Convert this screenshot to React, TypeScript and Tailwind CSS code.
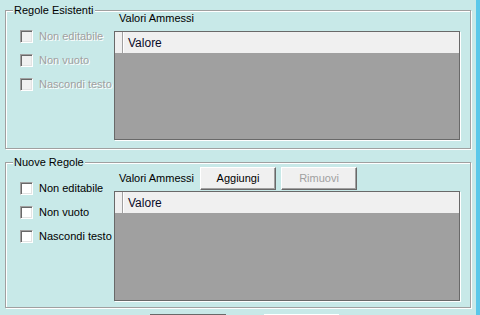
import React from "react";

const font = { fontFamily: '"Liberation Sans", Arial, sans-serif' };

function Check({ label, disabled }: { label: string; disabled?: boolean }) {
  return (
    <div className="flex items-center h-[13px] gap-[6px]">
      <span
        className={
          "block w-[13px] h-[13px] border border-t-[#a0a0a0] border-l-[#a0a0a0] border-b-white border-r-white shadow-[inset_1px_1px_0_#696969,inset_-1px_-1px_0_#e3e3e3] " +
          (disabled ? "bg-[#f0f0f0]" : "bg-white")
        }
      />
      <span
        className={
          "text-[11px] leading-[13px] " +
          (disabled ? "text-[#a0a0a0] [text-shadow:1px_1px_0_#ffffff]" : "text-black")
        }
      >
        {label}
      </span>
    </div>
  );
}

function ListBox({ height }: { height: string }) {
  return (
    <div className={"w-[346px] shrink-0 border border-[#696969] bg-[#a0a0a0] shadow-[1px_1px_0_#fff] flex flex-col " + height}>
      <div className="h-[22px] bg-[#f0f0f0] border-b border-[#a0a0a0] flex">
        <div className="w-[8px] border-r border-[#a0a0a0] shadow-[1px_0_0_#fff]" />
        <div className="pl-[5px] flex items-center text-[12px] text-[#0a0a28]">Valore</div>
      </div>
    </div>
  );
}

function Button({ label, disabled }: { label: string; disabled?: boolean }) {
  return (
    <div
      className={
        "w-[76px] h-[23px] bg-[#f0f0f0] border border-t-white border-l-white border-b-[#696969] border-r-[#696969] shadow-[inset_-1px_-1px_0_#a0a0a0] flex items-center justify-center text-[11px] " +
        (disabled ? "text-[#a0a0a0]" : "text-black")
      }
    >
      {label}
    </div>
  );
}

function Group({ title, className, children }: { title: string; className: string; children: React.ReactNode }) {
  return (
    <div
      className={
        "relative shrink-0 w-[466px] border border-[#a0a0a0] shadow-[inset_1px_1px_0_#fff,1px_1px_0_#fff] " + className
      }
    >
      <span className="absolute left-[7px] top-[-8px] px-[1px] bg-[#c8e9e8] text-[11px] leading-[14px] text-black">
        {title}
      </span>
      {children}
    </div>
  );
}

export default function App() {
  return (
    <div className="w-[480px] h-[315px] overflow-hidden bg-[#c8e9e8] flex" style={font}>
      <div className="flex-1 pt-[10px] pl-[5px] flex flex-col">
        <Group title="Regole Esistenti" className="h-[139px]">
          <div className="flex">
            <div className="w-[108px] pl-[14px] pt-[19px] flex flex-col gap-[11px]">
              <Check label="Non editabile" disabled />
              <Check label="Non vuoto" disabled />
              <Check label="Nascondi testo" disabled />
            </div>
            <div className="flex flex-col">
              <div className="h-[20px] pt-[1px] pl-[5px] text-[11px] leading-[13px] text-black">Valori Ammessi</div>
              <ListBox height="h-[109px]" />
            </div>
          </div>
        </Group>

        <div className="h-[13px] shrink-0" />

        <Group title="Nuove Regole" className="h-[146px]">
          <div className="flex">
            <div className="w-[108px] pl-[14px] pt-[19px] flex flex-col gap-[11px]">
              <Check label="Non editabile" />
              <Check label="Non vuoto" />
              <Check label="Nascondi testo" />
            </div>
            <div className="flex flex-col">
              <div className="h-[28px] pt-[2px] flex items-center">
                <span className="pl-[5px] w-[86px] text-[11px] leading-[13px] text-black">Valori Ammessi</span>
                <div className="flex gap-[5px]">
                  <Button label="Aggiungi" />
                  <Button label="Rimuovi" disabled />
                </div>
              </div>
              <ListBox height="h-[110px]" />
            </div>
          </div>
        </Group>

        <div className="shrink-0 pt-[6px] pl-[145px] flex gap-[38px]">
          <div className="w-[76px] h-[23px] border-t border-[#696969] bg-[#f0f0f0]" />
          <div className="w-[75px] h-[23px] border-t border-white bg-[#f0f0f0]" />
        </div>
      </div>
      <div className="w-[4px] bg-[#5bc8ea]" />
    </div>
  );
}
